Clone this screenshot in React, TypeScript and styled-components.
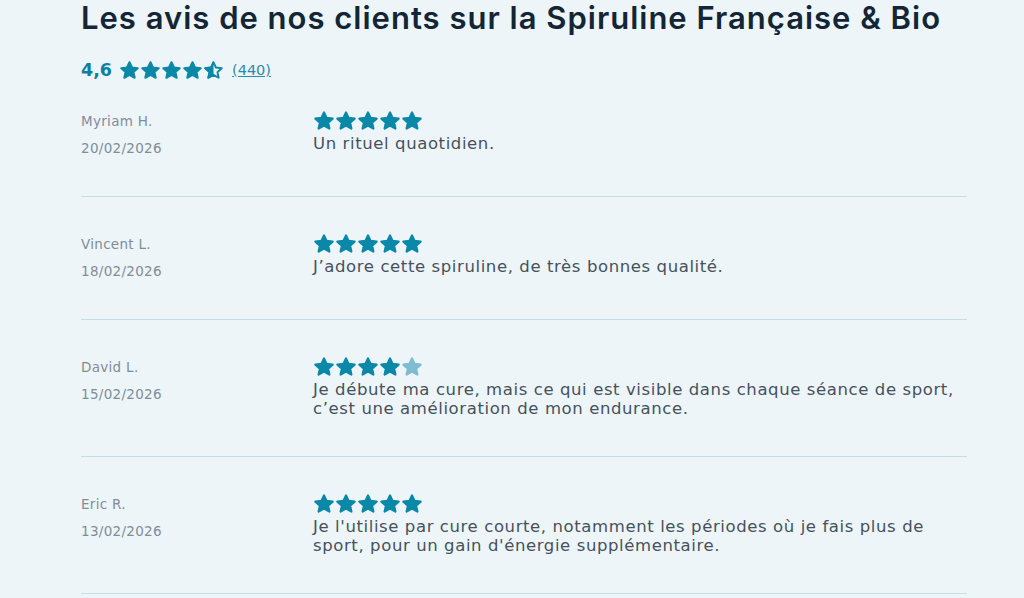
import styled, { createGlobalStyle } from "styled-components";

const GlobalStyle = createGlobalStyle`
    html, body {
        margin: 0;
        padding: 0;
        background-color: #edf5f9;
    }
    body {
        font-family: "DejaVu Sans", "Open Sans", sans-serif;
    }
`;

const Page = styled.main`
    width: 886px;
    padding: 0 0 0 81px;
    box-sizing: content-box;
`;

const Title = styled.h2`
    margin: 0;
    padding-top: 0;
    font-family: "Inter", "Open Sans", sans-serif;
    font-size: 31px;
    line-height: 36px;
    font-weight: 600;
    color: #142635;
    letter-spacing: 1px;
`;

const Summary = styled.div`
    display: flex;
    align-items: center;
    gap: 7px;
    margin-top: 22px;
    height: 24px;
`;

const Score = styled.span`
    font-size: 17.5px;
    font-weight: 700;
    color: #0d7fa0;
`;

const CountLink = styled.a`
    font-size: 14.5px;
    color: #2a8cab;
    text-decoration: underline;
    margin-left: 1px;
`;

const ReviewList = styled.ul`
    list-style: none;
    margin: 16px 0 0;
    padding: 0;
`;

const ReviewItem = styled.li`
    display: grid;
    grid-template-columns: 232px 1fr;
    padding: 12px 0 38px;
    border-bottom: 1px solid #c3dde9;
    & + & {
        padding-top: 36px;
    }
`;

const Author = styled.div`
    display: flex;
    flex-direction: column;
    gap: 7px;
    padding-top: 1px;
    font-size: 13.5px;
    line-height: 20px;
    color: #7d8e9b;
    letter-spacing: 0.3px;
`;

const Body = styled.div`
    display: flex;
    flex-direction: column;
    gap: 2px;
`;

const ReviewText = styled.p`
    margin: 0;
    font-size: 16.5px;
    line-height: 19px;
    color: #46515c;
    letter-spacing: 0.6px;
`;

const StarRow = styled.div<{ $gap: number }>`
    display: flex;
    gap: ${(p) => p.$gap}px;
`;

const STAR = "M12 2.6l2.85 6.05 6.55.72-4.9 4.45 1.37 6.45L12 16.95l-5.87 3.32 1.37-6.45-4.9-4.45 6.55-.72z";

type StarKind = "full" | "half" | "light";

function Star({ kind, size }: { kind: StarKind; size: number }) {
    const color = "#0a88a7";
    if (kind === "half") {
        return (
            <svg width={size} height={size} viewBox="0 0 24 24">
                <defs>
                    <clipPath id="half-left">
                        <rect x="0" y="0" width="12" height="24" />
                    </clipPath>
                </defs>
                <path d={STAR} fill="none" stroke={color} strokeWidth="2.2" strokeLinejoin="round" />
                <path d={STAR} fill={color} stroke={color} strokeWidth="2.2" strokeLinejoin="round" clipPath="url(#half-left)" />
            </svg>
        );
    }
    const fill = kind === "light" ? "#7fbcd0" : color;
    return (
        <svg width={size} height={size} viewBox="0 0 24 24">
            <path d={STAR} fill={fill} stroke={fill} strokeWidth="2.4" strokeLinejoin="round" />
        </svg>
    );
}

function Stars({ rating, size, gap }: { rating: number; size: number; gap: number }) {
    const kinds: StarKind[] = [1, 2, 3, 4, 5].map((n) =>
        rating >= n ? "full" : rating >= n - 0.5 ? "half" : "light"
    );
    return (
        <StarRow $gap={gap}>
            {kinds.map((k, i) => (
                <Star key={i} kind={k} size={size} />
            ))}
        </StarRow>
    );
}

const reviews = [
    { name: "Myriam H.", date: "20/02/2026", rating: 5, text: "Un rituel quaotidien." },
    { name: "Vincent L.", date: "18/02/2026", rating: 5, text: "J’adore cette spiruline, de très bonnes qualité." },
    {
        name: "David L.",
        date: "15/02/2026",
        rating: 4,
        text: "Je débute ma cure, mais ce qui est visible dans chaque séance de sport, c’est une amélioration de mon endurance.",
    },
    {
        name: "Eric R.",
        date: "13/02/2026",
        rating: 5,
        text: "Je l'utilise par cure courte, notamment les périodes où je fais plus de sport, pour un gain d'énergie supplémentaire.",
    },
];

export default function App() {
    return (
        <>
            <GlobalStyle />
            <Page>
                <Title>Les avis de nos clients sur la Spiruline Française &amp; Bio</Title>
                <Summary>
                    <Score>4,6</Score>
                    <Stars rating={4.6} size={21} gap={-1} />
                    <CountLink href="#avis">(440)</CountLink>
                </Summary>
                <ReviewList>
                    {reviews.map((r) => (
                        <ReviewItem key={r.name}>
                            <Author>
                                <span>{r.name}</span>
                                <span>{r.date}</span>
                            </Author>
                            <Body>
                                <Stars rating={r.rating} size={22} gap={-0.5} />
                                <ReviewText>{r.text}</ReviewText>
                            </Body>
                        </ReviewItem>
                    ))}
                </ReviewList>
            </Page>
        </>
    );
}
